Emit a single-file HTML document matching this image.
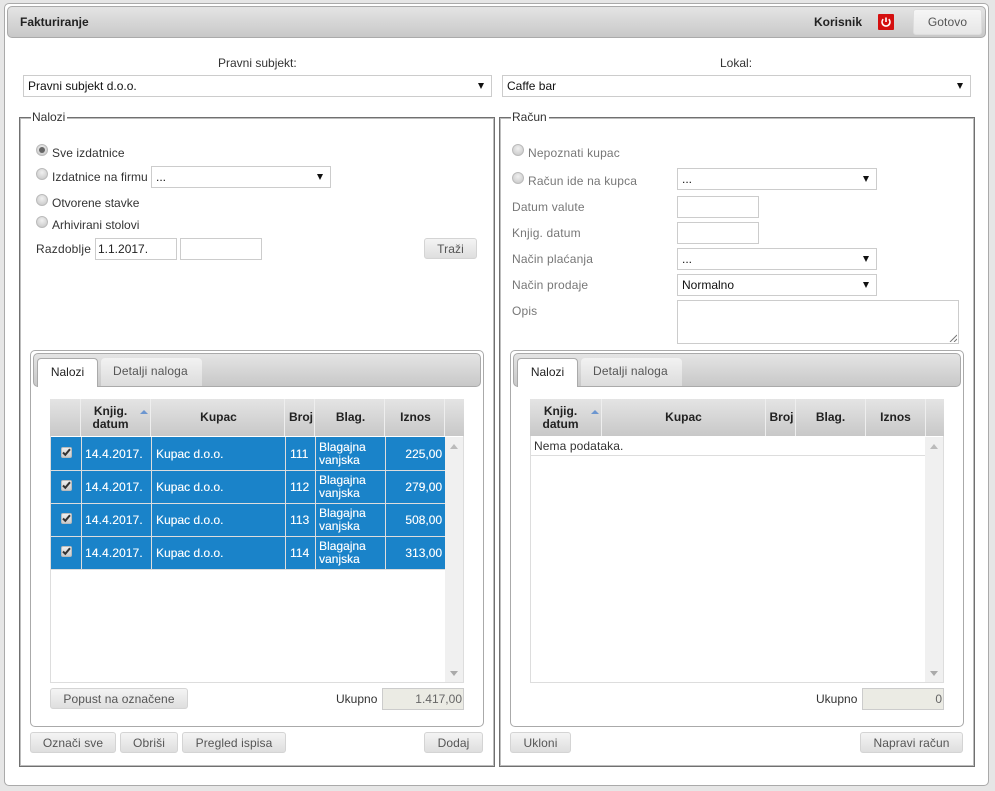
<!DOCTYPE html>
<html><head><meta charset="utf-8"><style>
html,body{margin:0;padding:0;width:995px;height:791px;overflow:hidden;background:#e6e6e6}
body{position:relative;font:12px/14px "Liberation Sans",sans-serif;color:#222}
div,span{position:absolute;box-sizing:border-box;white-space:nowrap}
.g{background:linear-gradient(#e4e4e4,#c8c8c8)}
.t{height:14px}
.gray{color:#777;letter-spacing:.17px}
.sel,.inp{background:#fff;border:1px solid #ccc;height:22px;color:#111;padding:3px 4px}
.sel::after{content:"";position:absolute;right:7px;top:7px;border:3px solid transparent;border-top:6px solid #111;border-bottom:0}
.rd{width:12px;height:12px;border-radius:50%;border:1px solid #bbb;background:radial-gradient(circle at 50% 35%,#f0f0f0,#c4c4c4)}
.rd.on::after{content:"";position:absolute;left:2px;top:2px;width:6px;height:6px;border-radius:50%;background:#666}
.btn{height:21px;border:1px solid #d4d4d4;border-radius:3px;background:linear-gradient(#f4f4f4,#dedede);color:#555;text-align:center;line-height:20px;letter-spacing:.1px}
.fs{border:1px solid #707070;box-shadow:inset 0 0 0 1px #bdbdbd;background:#fff}
.leg{background:#fff;padding:0 2px 0 1px;height:14px;color:#333}
.panel{border:1px solid #aaa;border-radius:5px;background:#fff}
.tabs{border:1px solid #aaa;border-radius:5px;background:linear-gradient(#e4e4e4,#c8c8c8)}
.tab1{background:#fff;border:1px solid #aaa;border-bottom:0;border-radius:4px 4px 0 0;color:#222;text-align:center;padding-top:6px}
.tab2{background:linear-gradient(#f2f2f2,#dcdcdc);border-radius:4px 4px 0 0;color:#555;padding:6px 0 0 12px;letter-spacing:.15px}
.th{background:linear-gradient(#e4e4e4,#c8c8c8);border-right:1px solid #eee;font-weight:bold;color:#222;text-align:center;display:flex;align-items:center;justify-content:center;white-space:normal;line-height:13px}
.sort{width:0;height:0;border:4px solid transparent;border-bottom:4px solid #6c96d0;border-top:0}
.row{background:#1a83c9;height:33px;left:51px;width:394px}
.hl{left:51px;width:394px;height:1px;background:#ddd}
.w{color:#fff;text-shadow:.3px 0 0 rgba(255,255,255,.55)}
.vl{width:1px;background:#ddd;top:0;bottom:0}
.cb{left:10px;top:10px;width:11px;height:11px;background:linear-gradient(#eee,#ccc);border:1px solid #bbb;border-radius:2px}
.cb svg{position:absolute;left:0;top:0}
.tot{background:#ebebe4;border:1px solid #ccc;height:22px;width:82px;text-align:right;color:#666;padding:3px 1px}
</style></head><body>

<div style="left:4px;top:3px;width:985px;height:783px;background:#fff;border:1px solid #aaa;border-radius:5px"></div>
<div class="g" style="left:7px;top:6px;width:979px;height:32px;border:1px solid #aaa;border-radius:5px"></div>
<span class="t" style="left:20px;top:15px;font-weight:bold">Fakturiranje</span>
<span class="t" style="left:814px;top:15px;font-weight:bold">Korisnik</span>
<div style="left:878px;top:14px;width:16px;height:16px;background:#d40f0f;border-radius:1px">
<svg width="16" height="16" viewBox="0 0 16 16" style="position:absolute;left:0;top:0"><path d="M5.2 5.2a4 4 0 1 0 5.6 0M8 3.5V8" fill="none" stroke="#fff" stroke-width="1.6"/></svg></div>
<div class="btn" style="left:913px;top:9px;width:69px;height:26px;line-height:24px;border-color:#ddd;background:linear-gradient(#f6f6f6,#e6e6e6)">Gotovo</div>

<span class="t" style="left:218px;top:56px;color:#333">Pravni subjekt:</span>
<div class="sel" style="left:23px;top:75px;width:469px">Pravni subjekt d.o.o.</div>
<span class="t" style="left:720px;top:56px;color:#333">Lokal:</span>
<div class="sel" style="left:502px;top:75px;width:469px">Caffe bar</div>

<div class="fs" style="left:19px;top:117px;width:476px;height:650px"></div>
<span class="leg" style="left:31px;top:110px">Nalozi</span>
<div class="fs" style="left:499px;top:117px;width:476px;height:650px"></div>
<span class="leg" style="left:511px;top:110px">Račun</span>

<!-- left form -->
<div class="rd on" style="left:36px;top:144px"></div><span class="t" style="left:52px;top:146px;color:#333;letter-spacing:.1px">Sve izdatnice</span>
<div class="rd" style="left:36px;top:168px"></div><span class="t" style="left:52px;top:170px;color:#333;letter-spacing:.06px">Izdatnice na firmu</span>
<div class="sel" style="left:151px;top:166px;width:180px">...</div>
<div class="rd" style="left:36px;top:194px"></div><span class="t" style="left:52px;top:196px;color:#333">Otvorene stavke</span>
<div class="rd" style="left:36px;top:216px"></div><span class="t" style="left:52px;top:218px;color:#333">Arhivirani stolovi</span>
<span class="t" style="left:36px;top:242px;color:#333;letter-spacing:.2px">Razdoblje</span>
<div class="inp" style="left:95px;top:238px;width:82px;padding:3px 2px;color:#222">1.1.2017.</div>
<div class="inp" style="left:180px;top:238px;width:82px"></div>
<div class="btn" style="left:424px;top:238px;width:53px">Traži</div>

<!-- right form -->
<div class="rd" style="left:512px;top:144px"></div><span class="t gray" style="left:528px;top:146px">Nepoznati kupac</span>
<div class="rd" style="left:512px;top:172px"></div><span class="t gray" style="left:528px;top:174px">Račun ide na kupca</span>
<div class="sel" style="left:677px;top:168px;width:200px">...</div>
<span class="t gray" style="left:512px;top:200px">Datum valute</span>
<div class="inp" style="left:677px;top:196px;width:82px"></div>
<span class="t gray" style="left:512px;top:226px">Knjig. datum</span>
<div class="inp" style="left:677px;top:222px;width:82px"></div>
<span class="t gray" style="left:512px;top:252px">Način plaćanja</span>
<div class="sel" style="left:677px;top:248px;width:200px">...</div>
<span class="t gray" style="left:512px;top:278px">Način prodaje</span>
<div class="sel" style="left:677px;top:274px;width:200px">Normalno</div>
<span class="t gray" style="left:512px;top:304px">Opis</span>
<div class="inp" style="left:677px;top:300px;width:282px;height:44px">
<svg width="8" height="8" style="position:absolute;right:1px;bottom:1px"><path d="M1 8L8 1M5 8L8 5" stroke="#777" fill="none"/></svg></div>

<!-- left panel -->
<div class="panel" style="left:30px;top:350px;width:454px;height:377px"></div>
<div class="tabs" style="left:33px;top:353px;width:448px;height:34px"></div>
<div class="tab1" style="left:37px;top:358px;width:61px;height:29px">Nalozi</div>
<div class="tab2" style="left:101px;top:358px;width:101px;height:28px">Detalji naloga</div>

<div style="left:50px;top:399px;width:414px;height:284px;border:1px solid #ddd;border-top:0;background:#fff"></div>
<div class="th" style="left:50px;top:399px;width:31px;height:37px"></div>
<div class="th" style="left:81px;top:399px;width:70px;height:37px;padding-right:10px">Knjig.<br>datum</div>
<div class="sort" style="left:140px;top:410px"></div>
<div class="th" style="left:151px;top:399px;width:134px;height:37px;padding-left:2px">Kupac</div>
<div class="th" style="left:285px;top:399px;width:30px;height:37px;padding-left:3px">Broj</div>
<div class="th" style="left:315px;top:399px;width:70px;height:37px;padding-left:2px">Blag.</div>
<div class="th" style="left:385px;top:399px;width:60px;height:37px;padding-left:2px">Iznos</div>
<div class="th" style="left:445px;top:399px;width:19px;height:37px;border:0"></div>
<div style="left:445px;top:437px;width:18px;height:245px;background:#f0f0f0"></div>
<div style="left:450px;top:444px;border:4px solid transparent;border-bottom:5px solid #bbb;border-top:0"></div>
<div style="left:450px;top:671px;border:4px solid transparent;border-top:5px solid #aaa;border-bottom:0"></div>

<div class="row" style="top:437px"><div class="cb"><svg width="9" height="9"><path d="M1 4.5l2.3 2.3L8 1.2" stroke="#333" stroke-width="2" fill="none"/></svg></div><div class="vl" style="left:30px"></div><div class="vl" style="left:100px"></div><div class="vl" style="left:234px"></div><div class="vl" style="left:264px"></div><div class="vl" style="left:334px"></div><span class="w" style="left:34px;top:10px;letter-spacing:.1px">14.4.2017.</span><span class="w" style="left:105px;top:10px">Kupac d.o.o.</span><span class="w" style="left:239px;top:10px">111</span><span class="w" style="left:268px;top:4px;line-height:13px">Blagajna<br>vanjska</span><span class="w" style="right:3px;top:10px">225,00</span></div>
<div class="row" style="top:470px"><div class="cb"><svg width="9" height="9"><path d="M1 4.5l2.3 2.3L8 1.2" stroke="#333" stroke-width="2" fill="none"/></svg></div><div class="vl" style="left:30px"></div><div class="vl" style="left:100px"></div><div class="vl" style="left:234px"></div><div class="vl" style="left:264px"></div><div class="vl" style="left:334px"></div><span class="w" style="left:34px;top:10px;letter-spacing:.1px">14.4.2017.</span><span class="w" style="left:105px;top:10px">Kupac d.o.o.</span><span class="w" style="left:239px;top:10px">112</span><span class="w" style="left:268px;top:4px;line-height:13px">Blagajna<br>vanjska</span><span class="w" style="right:3px;top:10px">279,00</span></div>
<div class="row" style="top:503px"><div class="cb"><svg width="9" height="9"><path d="M1 4.5l2.3 2.3L8 1.2" stroke="#333" stroke-width="2" fill="none"/></svg></div><div class="vl" style="left:30px"></div><div class="vl" style="left:100px"></div><div class="vl" style="left:234px"></div><div class="vl" style="left:264px"></div><div class="vl" style="left:334px"></div><span class="w" style="left:34px;top:10px;letter-spacing:.1px">14.4.2017.</span><span class="w" style="left:105px;top:10px">Kupac d.o.o.</span><span class="w" style="left:239px;top:10px">113</span><span class="w" style="left:268px;top:4px;line-height:13px">Blagajna<br>vanjska</span><span class="w" style="right:3px;top:10px">508,00</span></div>
<div class="row" style="top:536px"><div class="cb"><svg width="9" height="9"><path d="M1 4.5l2.3 2.3L8 1.2" stroke="#333" stroke-width="2" fill="none"/></svg></div><div class="vl" style="left:30px"></div><div class="vl" style="left:100px"></div><div class="vl" style="left:234px"></div><div class="vl" style="left:264px"></div><div class="vl" style="left:334px"></div><span class="w" style="left:34px;top:10px;letter-spacing:.1px">14.4.2017.</span><span class="w" style="left:105px;top:10px">Kupac d.o.o.</span><span class="w" style="left:239px;top:10px">114</span><span class="w" style="left:268px;top:4px;line-height:13px">Blagajna<br>vanjska</span><span class="w" style="right:3px;top:10px">313,00</span></div>
<div class="hl" style="top:470px"></div>
<div class="hl" style="top:503px"></div>
<div class="hl" style="top:536px"></div>
<div class="hl" style="top:569px"></div>

<div class="btn" style="left:50px;top:688px;width:138px">Popust na označene</div>
<span class="t" style="left:336px;top:692px;color:#333">Ukupno</span>
<div class="tot" style="left:382px;top:688px">1.417,00</div>

<div class="btn" style="left:30px;top:732px;width:86px">Označi sve</div>
<div class="btn" style="left:120px;top:732px;width:58px">Obriši</div>
<div class="btn" style="left:182px;top:732px;width:104px">Pregled ispisa</div>
<div class="btn" style="left:424px;top:732px;width:59px">Dodaj</div>

<!-- right panel -->
<div class="panel" style="left:510px;top:350px;width:454px;height:377px"></div>
<div class="tabs" style="left:513px;top:353px;width:448px;height:34px"></div>
<div class="tab1" style="left:517px;top:358px;width:61px;height:29px">Nalozi</div>
<div class="tab2" style="left:581px;top:358px;width:101px;height:28px">Detalji naloga</div>

<div style="left:530px;top:399px;width:414px;height:284px;border:1px solid #ddd;border-top:0;background:#fff"></div>
<div class="th" style="left:530px;top:399px;width:72px;height:37px;padding-right:10px">Knjig.<br>datum</div>
<div class="sort" style="left:591px;top:410px"></div>
<div class="th" style="left:602px;top:399px;width:164px;height:37px">Kupac</div>
<div class="th" style="left:766px;top:399px;width:30px;height:37px;padding-left:2px">Broj</div>
<div class="th" style="left:796px;top:399px;width:70px;height:37px">Blag.</div>
<div class="th" style="left:866px;top:399px;width:60px;height:37px">Iznos</div>
<div class="th" style="left:926px;top:399px;width:18px;height:37px;border:0"></div>
<div style="left:925px;top:437px;width:18px;height:245px;background:#f0f0f0"></div>
<div style="left:930px;top:444px;border:4px solid transparent;border-bottom:5px solid #bbb;border-top:0"></div>
<div style="left:930px;top:671px;border:4px solid transparent;border-top:5px solid #aaa;border-bottom:0"></div>
<span class="t" style="left:534px;top:439px;color:#333;letter-spacing:.1px">Nema podataka.</span>
<div style="left:531px;top:455px;width:394px;height:1px;background:#ddd"></div>

<span class="t" style="left:816px;top:692px;color:#333">Ukupno</span>
<div class="tot" style="left:862px;top:688px">0</div>

<div class="btn" style="left:510px;top:732px;width:61px">Ukloni</div>
<div class="btn" style="left:860px;top:732px;width:103px">Napravi račun</div>

</body></html>
